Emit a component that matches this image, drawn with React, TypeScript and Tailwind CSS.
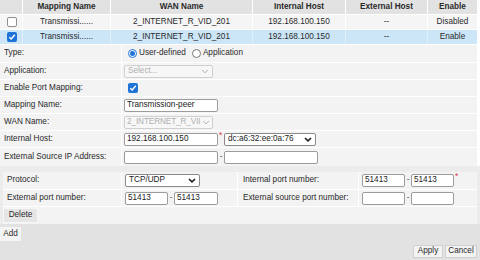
import React from "react";

const Chevron = ({ light = false }: { light?: boolean }) => (
  <svg width="8" height="5" viewBox="0 0 8 5" className="shrink-0">
    <path
      d="M1 1 L4 3.8 L7 1"
      fill="none"
      stroke={light ? "#b5b5b5" : "#222"}
      strokeWidth={light ? 1 : 1.7}
    />
  </svg>
);

const Check = () => (
  <span className="w-[10px] h-[10px] rounded-[2px] bg-[#1f73d8] flex items-center justify-center shrink-0">
    <svg width="8" height="8" viewBox="0 0 8 8">
      <path d="M1.3 4.2 L3.2 6 L6.8 1.8" fill="none" stroke="#fff" strokeWidth="1.4" />
    </svg>
  </span>
);

const Unchecked = () => (
  <span className="w-[10px] h-[10px] rounded-[2px] bg-white border border-[#8f8f8f] shrink-0" />
);

const Input = ({ w, value = "" }: { w: string; value?: string }) => (
  <div className={`${w} h-[13px] bg-white border border-[#9c9c9c] rounded-[2px] px-[2px] flex items-center leading-none text-[#222]`}>
    {value}
  </div>
);

const Dash = () => <span className="w-[6px] text-center leading-none text-[#555]">-</span>;
const Star = () => <span className="text-[#e0304a] leading-none w-[5px] self-start mt-[1px] pl-[1px]">*</span>;

const FormRow = ({ label, children, h = "h-[17px]" }: { label: string; children?: React.ReactNode; h?: string }) => (
  <div className={`flex ${h} border-t border-white bg-[#f3f3f3]`}>
    <div className="w-[121px] pl-[4px] flex items-center">{label}</div>
    <div className="flex-1 border-l border-white flex items-center pl-[2px]">{children}</div>
  </div>
);

export default function App() {
  const cols = "grid grid-cols-[22px_88px_142px_93px_82px_50px]";
  return (
    <div className="w-[480px] h-[260px] bg-white font-['Liberation_Sans',Arial,sans-serif] text-[8.2px] text-[#2a2a2a] overflow-hidden flex flex-col">
      <div className="w-[477px]">
        <div className={`${cols} h-[14px] bg-[#e2e2e2] font-bold text-[#2a2a2a]`}>
          <div />
          <div className="border-l border-white flex items-center justify-center">Mapping Name</div>
          <div className="border-l border-white flex items-center justify-center">WAN Name</div>
          <div className="border-l border-white flex items-center justify-center">Internal Host</div>
          <div className="border-l border-white flex items-center justify-center">External Host</div>
          <div className="border-l border-white flex items-center justify-center">Enable</div>
        </div>
        <div className={`${cols} h-[15px] bg-[#f5f5f5] border-t border-white`}>
          <div className="flex items-center pl-[7px]"><Unchecked /></div>
          <div className="border-l border-white flex items-center justify-center">Transmissi......</div>
          <div className="border-l border-white flex items-center justify-center">2_INTERNET_R_VID_201</div>
          <div className="border-l border-white flex items-center justify-center">192.168.100.150</div>
          <div className="border-l border-white flex items-center justify-center">--</div>
          <div className="border-l border-white flex items-center justify-center">Disabled</div>
        </div>
        <div className={`${cols} h-[15px] bg-[#cce6f8] border-t border-white`}>
          <div className="flex items-center pl-[7px]"><Check /></div>
          <div className="border-l border-white/40 flex items-center justify-center">Transmissi......</div>
          <div className="border-l border-white/40 flex items-center justify-center">2_INTERNET_R_VID_201</div>
          <div className="border-l border-white/40 flex items-center justify-center">192.168.100.150</div>
          <div className="border-l border-white/40 flex items-center justify-center">--</div>
          <div className="border-l border-white/40 flex items-center justify-center">Enable</div>
        </div>

        <FormRow label="Type:" h="h-[18px]">
          <span className="ml-[4px] w-[9px] h-[9px] rounded-full border border-[#1f73d8] flex items-center justify-center bg-white">
            <span className="w-[5px] h-[5px] rounded-full bg-[#1f73d8]" />
          </span>
          <span className="ml-[2px]">User-defined</span>
          <span className="ml-[6px] w-[9px] h-[9px] rounded-full border border-[#777] bg-white" />
          <span className="ml-[2px]">Application</span>
        </FormRow>
        <FormRow label="Application:">
          <div className="w-[89px] h-[13px] border border-[#d0d0d0] rounded-[2px] bg-[#f7f7f7] flex items-center justify-between px-[3px] text-[#b0b0b0]">
            <span>Select...</span>
            <Chevron light />
          </div>
        </FormRow>
        <FormRow label="Enable Port Mapping:">
          <span className="ml-[4px]"><Check /></span>
        </FormRow>
        <FormRow label="Mapping Name:">
          <Input w="w-[94px]" value="Transmission-peer" />
        </FormRow>
        <FormRow label="WAN Name:">
          <div className="w-[89px] h-[13px] border border-[#d0d0d0] rounded-[2px] bg-[#f7f7f7] flex items-center justify-between pl-[2px] pr-[2px] text-[#b0b0b0]">
            <span className="whitespace-nowrap tracking-[-0.1px]">2_INTERNET_R_VII</span>
            <Chevron light />
          </div>
        </FormRow>
        <FormRow label="Internal Host:">
          <Input w="w-[94px]" value="192.168.100.150" />
          <Star />
          <div className="ml-[1px] w-[92px] h-[13px] border border-[#8a8a8a] rounded-[2px] bg-white flex items-center justify-between px-[3px] text-[#222]">
            <span>dc:a6:32:ee:0a:76</span>
            <Chevron />
          </div>
        </FormRow>
        <FormRow label="External Source IP Address:" h="h-[19px]">
          <Input w="w-[94px]" />
          <Dash />
          <Input w="w-[94px]" />
        </FormRow>
      </div>

      <div className="w-[480px] bg-[#ececec] pt-[6px] pl-[3px] pr-[3px]">
        <div className="grid grid-cols-[118px_116px_121px_119px] bg-[#f3f3f3]">
          <div className="h-[17px] flex items-center pl-[4px]">Protocol:</div>
          <div className="h-[17px] flex items-center pl-[3px] border-l border-white">
            <div className="w-[75px] h-[13px] border border-[#8a8a8a] rounded-[2px] bg-white flex items-center justify-between px-[3px] text-[#222]">
              <span>TCP/UDP</span>
              <Chevron />
            </div>
          </div>
          <div className="h-[17px] flex items-center pl-[5px] border-l border-white">Internal port number:</div>
          <div className="h-[17px] flex items-center pl-[3px] border-l border-white">
            <Input w="w-[43px]" value="51413" />
            <Dash />
            <Input w="w-[43px]" value="51413" />
            <Star />
          </div>

          <div className="h-[17px] flex items-center pl-[4px] border-t border-white">External port number:</div>
          <div className="h-[17px] flex items-center pl-[3px] border-l border-t border-white">
            <Input w="w-[43px]" value="51413" />
            <Dash />
            <Input w="w-[44px]" value="51413" />
          </div>
          <div className="h-[17px] flex items-center pl-[5px] border-l border-t border-white">External source port number:</div>
          <div className="h-[17px] flex items-center pl-[3px] border-l border-t border-white">
            <Input w="w-[43px]" />
            <Dash />
            <Input w="w-[43px]" />
          </div>

          <div className="col-span-4 h-[18px] flex items-center border-t border-white">
            <div className="h-[15px] w-[35px] bg-[#e6e6e6] border border-[#f7f7f7] flex items-center justify-center">Delete</div>
          </div>
        </div>
      </div>

      <div className="flex-1 bg-[#e2e2e2] flex flex-col">
        <div className="pt-[3px]">
          <div className="w-[21px] h-[14px] bg-[#f4f4f4] flex items-center justify-center">Add</div>
        </div>
        <div className="flex justify-end gap-[2px] pr-[3px] mt-[4px]">
          <div className="w-[30px] h-[13px] bg-[#f3f3f3] border border-[#d0d0d0] flex items-center justify-center">Apply</div>
          <div className="w-[32px] h-[13px] bg-[#f3f3f3] border border-[#d0d0d0] flex items-center justify-center">Cancel</div>
        </div>
      </div>
    </div>
  );
}
